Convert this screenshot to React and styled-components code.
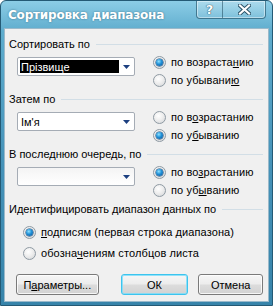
import React from 'react';
import styled, { createGlobalStyle } from 'styled-components';

const GlobalStyle = createGlobalStyle`
  html, body { margin: 0; padding: 0; background: #ffffff; }
  body { font-family: "Liberation Sans", Tahoma, Arial, sans-serif; font-size: 11px; color: #000; }
`;

const Window = styled.div`
  width: 273px;
  height: 306px;
  box-sizing: border-box;
  display: flex;
  flex-direction: column;
  background: linear-gradient(#8ccde6 0%, #5eaccd 10%, #4592b8 55%, #3784aa 100%);
  border: 1px solid #245a75;
  border-radius: 6px 6px 0 0;
  padding: 0 3px 3px;
`;

const TitleBar = styled.div`
  height: 27px;
  display: flex;
  align-items: flex-start;
  justify-content: space-between;
  padding-left: 4px;
`;

const Title = styled.div`
  margin-top: 7px;
  font-family: "DejaVu Sans", sans-serif;
  font-weight: bold;
  font-size: 12px;
  letter-spacing: -0.2px;
  color: #ffffff;
  text-shadow: 0 0 2px rgba(20, 60, 80, 0.6);
`;

const Caption = styled.div`
  display: flex;
  margin-right: 3px;
  border: 1px solid rgba(20, 60, 80, 0.55);
  border-top: none;
  border-radius: 0 0 4px 4px;
  box-shadow: inset 0 0 0 1px rgba(255, 255, 255, 0.45);
  overflow: hidden;
`;

const CapButton = styled.div`
  width: ${p => p.$w}px;
  height: 17px;
  display: flex;
  align-items: center;
  justify-content: center;
  background: linear-gradient(rgba(255, 255, 255, 0.28), rgba(255, 255, 255, 0.08));
  border-left: ${p => (p.$sep ? '1px solid rgba(20,60,80,0.5)' : 'none')};
  color: #ffffff;
  font-family: "DejaVu Sans", sans-serif;
  font-weight: bold;
  font-size: 13px;
  text-shadow: 0 0 1px #1d4a60, 0 0 1px #1d4a60;
`;

const Body = styled.div`
  flex: 1;
  background: #f0f0f0;
  border: 1px solid #9ab9ca;
  padding: 8px 5px 0 4px;
  display: flex;
  flex-direction: column;
`;

const Section = styled.div`
  display: flex;
  flex-direction: column;
  margin-bottom: ${p => p.$mb || 0}px;
`;

const Header = styled.div`
  display: flex;
  align-items: center;
  gap: 6px;
  height: 14px;
  white-space: nowrap;
  &::after {
    content: '';
    flex: 1;
    height: 1px;
    background: #d2dee6;
  }
`;

const Row = styled.div`
  display: flex;
  align-items: flex-start;
  margin-top: 2px;
  padding-left: 8px;
`;

const Combo = styled.div`
  width: 118px;
  height: 19px;
  margin-top: 4px;
  box-sizing: border-box;
  border: 1px solid #a5acb5;
  border-radius: 2px;
  background: ${p => (p.$empty ? 'linear-gradient(#f4f4f4, #ffffff)' : '#ffffff')};
  display: flex;
  align-items: stretch;
  padding: 2px;
`;

const ComboText = styled.div`
  flex: 1;
  display: flex;
  align-items: center;
  padding-left: 1px;
  background: ${p => (p.$selected ? '#000000' : 'transparent')};
  color: ${p => (p.$selected ? '#ffffff' : '#000000')};
  margin-right: 2px;
`;

const Arrow = styled.div`
  width: 11px;
  display: flex;
  align-items: center;
  justify-content: center;
`;

const Radios = styled.div`
  display: flex;
  flex-direction: column;
  margin-left: 18px;
`;

const RadioRow = styled.div`
  display: flex;
  align-items: center;
  gap: 5px;
  height: 18px;
  white-space: nowrap;
  letter-spacing: 0.1px;
`;

const RadioDot = styled.span`
  width: 13px;
  height: 13px;
  box-sizing: border-box;
  border-radius: 50%;
  border: 1px solid #8f9aa3;
  background: radial-gradient(circle at 40% 35%, #ffffff 0%, #eeeeee 45%, #d0d3d6 100%);
  display: flex;
  align-items: center;
  justify-content: center;
  flex: none;
  &::after {
    content: '';
    display: ${p => (p.$checked ? 'block' : 'none')};
    width: 7px;
    height: 7px;
    border-radius: 50%;
    background: radial-gradient(circle at 40% 35%, #8fe2ff 0%, #1f8fd6 45%, #0b4f92 100%);
    box-shadow: 0 0 0 0.5px #0d3f6e;
  }
`;

const Key = styled.span`
  text-decoration: underline;
`;

const IdList = styled.div`
  display: flex;
  flex-direction: column;
  margin-top: 7px;
  padding-left: 14px;
  gap: 3px;
`;

const Footer = styled.div`
  display: flex;
  margin-top: auto;
  margin-bottom: 6px;
  padding-left: 7px;
`;

const Button = styled.div`
  width: ${p => p.$w}px;
  height: 21px;
  margin-left: ${p => p.$ml || 0}px;
  box-sizing: border-box;
  border: 1px solid ${p => (p.$def ? '#3cc4ee' : '#7a7a7a')};
  border-radius: 3px;
  background: linear-gradient(#f6f6f6 0%, #ececec 48%, #dcdcdc 52%, #d2d2d2 100%);
  box-shadow: inset 0 0 0 1px ${p => (p.$def ? 'rgba(120,220,250,0.8)' : 'rgba(255,255,255,0.8)')};
  display: flex;
  align-items: center;
  justify-content: center;
`;

const ArrowIcon = () => (
  <svg width="7" height="4" viewBox="0 0 7 4">
    <path d="M0 0 H7 L3.5 4 Z" fill="#1c3f80" />
  </svg>
);

const CloseIcon = () => (
  <svg width="13" height="11" viewBox="0 0 13 11">
    <path d="M2 1.5 L11 9.5 M11 1.5 L2 9.5" stroke="#2a5166" strokeWidth="4" strokeLinecap="square" />
    <path d="M2 1.5 L11 9.5 M11 1.5 L2 9.5" stroke="#ffffff" strokeWidth="2.2" strokeLinecap="square" />
  </svg>
);

const Radio = ({ checked, children }) => (
  <RadioRow>
    <RadioDot $checked={checked} />
    <span>{children}</span>
  </RadioRow>
);

const SortBlock = ({ label, value, selected, asc, keys, mb }) => (
  <Section $mb={mb}>
    <Header>{label}</Header>
    <Row>
      <Combo $empty={!value}>
        <ComboText $selected={selected}>{value}</ComboText>
        <Arrow><ArrowIcon /></Arrow>
      </Combo>
      <Radios>
        <Radio checked={asc}>{keys[0]}</Radio>
        <Radio checked={!asc}>{keys[1]}</Radio>
      </Radios>
    </Row>
  </Section>
);

const App = () => (
  <>
    <GlobalStyle />
    <Window>
      <TitleBar>
        <Title>Сортировка диапазона</Title>
        <Caption>
          <CapButton $w={25}>?</CapButton>
          <CapButton $w={42} $sep><CloseIcon /></CapButton>
        </Caption>
      </TitleBar>
      <Body>
        <SortBlock
          label="Сортировать по"
          value="Прізвище"
          selected
          asc
          mb={3}
          keys={[
            <>по возраста<Key>н</Key>ию</>,
            <>по убывани<Key>ю</Key></>,
          ]}
        />
        <SortBlock
          label="Затем по"
          value="Ім'я"
          asc={false}
          mb={3}
          keys={[
            <>по в<Key>о</Key>зрастанию</>,
            <>по у<Key>б</Key>ыванию</>,
          ]}
        />
        <SortBlock
          label="В последнюю очередь, по"
          value=""
          asc
          keys={[
            <>по во<Key>з</Key>растанию</>,
            <>по уб<Key>ы</Key>ванию</>,
          ]}
        />
        <Section>
          <Header style={{ marginTop: 3 }}>Идентифицировать диапазон данных по</Header>
          <IdList>
            <Radio checked><Key>п</Key>одписям (первая строка диапазона)</Radio>
            <Radio>обозна<Key>ч</Key>ениям столбцов листа</Radio>
          </IdList>
        </Section>
        <Footer>
          <Button $w={83}>П<Key>а</Key>раметры...</Button>
          <Button $w={68} $ml={22} $def>ОК</Button>
          <Button $w={65} $ml={10}>Отмена</Button>
        </Footer>
      </Body>
    </Window>
  </>
);

export default App;
